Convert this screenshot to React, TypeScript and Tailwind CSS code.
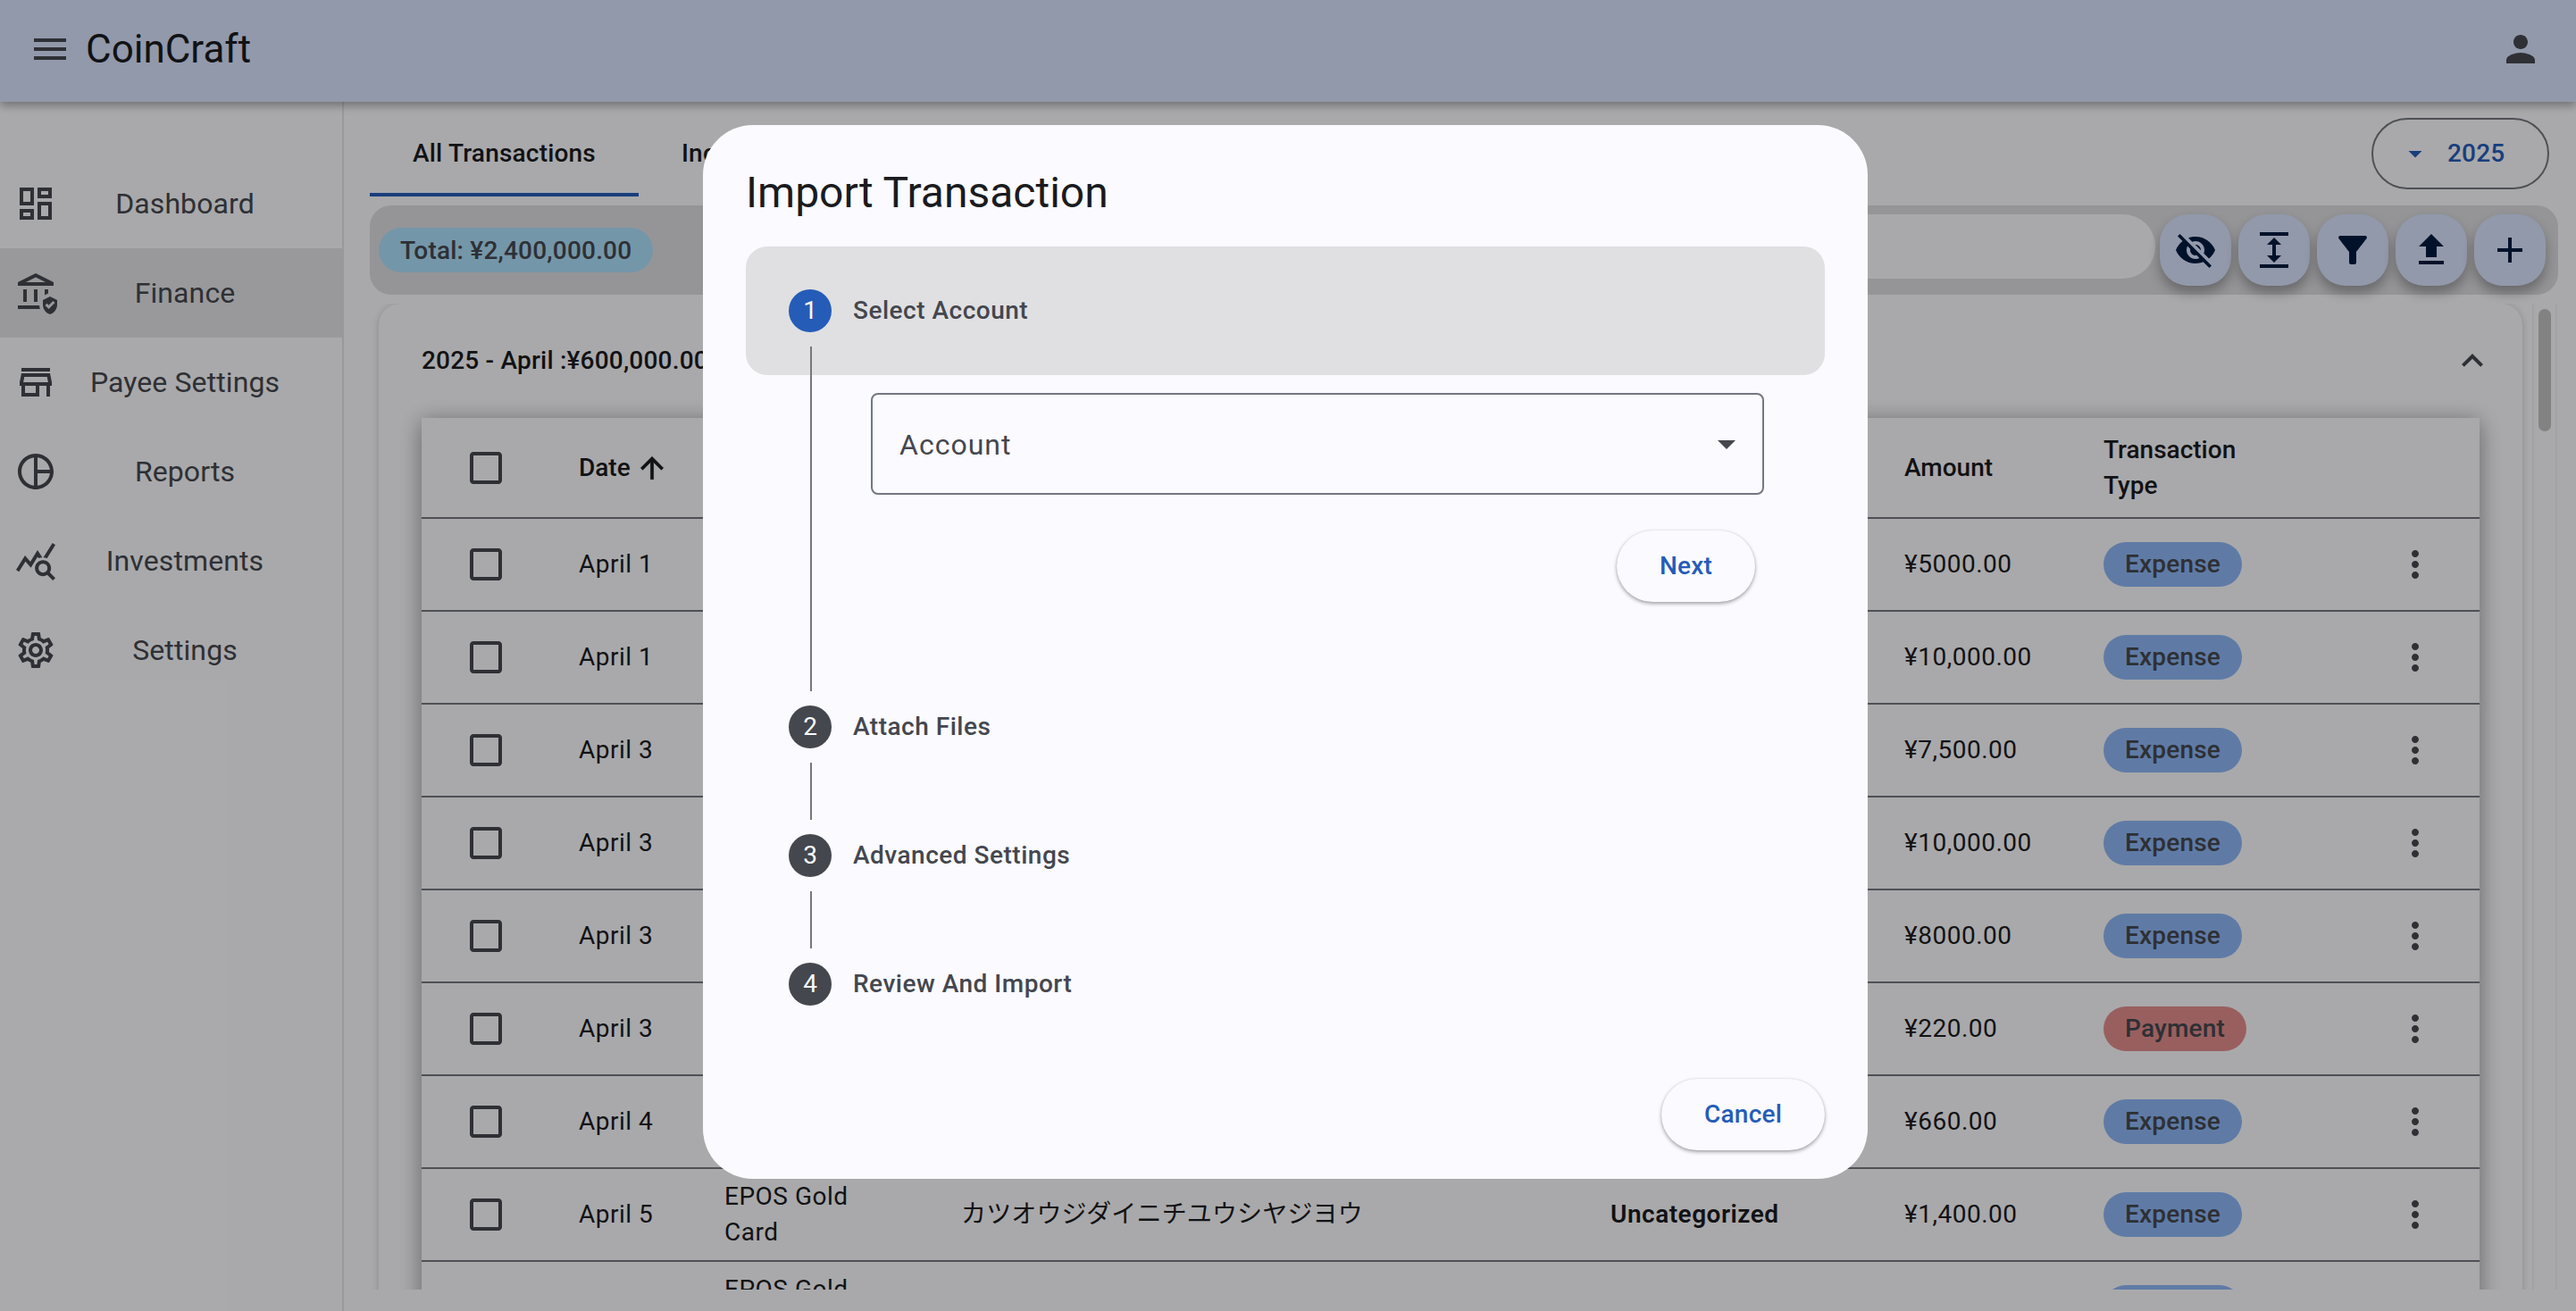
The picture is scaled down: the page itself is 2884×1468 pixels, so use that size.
import {
  MdAdd,
  MdArrowDropDown,
  MdCheckBoxOutlineBlank,
  MdExpand,
  MdExpandLess,
  MdFileUpload,
  MdFilterAlt,
  MdMenu,
  MdMoreVert,
  MdOutlineAssuredWorkload,
  MdOutlineDashboard,
  MdOutlinePieChart,
  MdOutlineSettings,
  MdOutlineStore,
  MdPerson,
  MdQueryStats,
  MdVisibilityOff,
} from "react-icons/md";

const rowGrid = "grid grid-cols-[176px_164px_265px_726px_329px_223px_325px_96px] items-center border-b-2 border-[#74777f]";

const navItems = [
  { label: "Dashboard", icon: MdOutlineDashboard },
  { label: "Finance", icon: MdOutlineAssuredWorkload, active: true },
  { label: "Payee Settings", icon: MdOutlineStore },
  { label: "Reports", icon: MdOutlinePieChart },
  { label: "Investments", icon: MdQueryStats },
  { label: "Settings", icon: MdOutlineSettings },
];

const rows = [
  { date: "April 1", amount: "¥5000.00", type: "Expense" },
  { date: "April 1", amount: "¥10,000.00", type: "Expense" },
  { date: "April 3", amount: "¥7,500.00", type: "Expense" },
  { date: "April 3", amount: "¥10,000.00", type: "Expense" },
  { date: "April 3", amount: "¥8000.00", type: "Expense" },
  { date: "April 3", amount: "¥220.00", type: "Payment" },
  { date: "April 4", amount: "¥660.00", type: "Expense" },
  {
    date: "April 5",
    account: "EPOS Gold Card",
    description: "カツオウジダイニチユウシヤジヨウ",
    category: "Uncategorized",
    amount: "¥1,400.00",
    type: "Expense",
  },
];

const actions = [MdVisibilityOff, MdExpand, MdFilterAlt, MdFileUpload, MdAdd];

function TypeChip({ type }: { type: string }) {
  const color = type === "Payment" ? "bg-[#e28d8d]" : "bg-[#8db5f3]";
  return (
    <span className={`inline-flex h-[50px] items-center rounded-full px-6 text-[28px] font-medium tracking-[0.2px] text-[#44474e] ${color}`}>
      {type}
    </span>
  );
}

function Checkbox() {
  return <MdCheckBoxOutlineBlank className="ml-12 text-[48px] text-[#44474e]" />;
}

function Sidebar() {
  return (
    <aside className="w-[385px] shrink-0 border-r-2 border-[#e2e2e5] pt-16">
      {navItems.map((item) => {
        const Icon = item.icon;
        return (
          <div key={item.label} className={`flex h-[100px] items-center pl-4 pr-[33px] ${item.active ? "bg-[#e2e2e5]" : ""}`}>
            <Icon className="shrink-0 text-[48px] text-[#44474e]" />
            <span className="flex-1 text-center text-[32px] tracking-[0.1px] text-[#44474e]">{item.label}</span>
          </div>
        );
      })}
    </aside>
  );
}

function Toolbar() {
  return (
    <div className="flex h-[100px] items-start rounded-[24px] bg-[#dcdce0] pl-[10px] pr-[14px] pt-[10px]">
      <span className="mt-[15px] inline-flex h-[50px] items-center rounded-full bg-[#acddf9] px-6 pt-[1px] text-[28px] font-medium tracking-[0.2px] text-[#44474e]">
        Total: ¥2,400,000.00
      </span>
      <div className="ml-[60px] mr-[5px] h-[72px] flex-1 rounded-full bg-[#faf9fd]" />
      <div className="flex gap-2">
        {actions.map((Icon, i) => (
          <button
            key={i}
            className="flex h-20 w-20 items-center justify-center rounded-[32px] bg-[#d8e2fc] shadow-[0_8px_14px_rgba(0,0,0,0.3)]"
          >
            <Icon className="text-[48px] text-[#001b3f]" />
          </button>
        ))}
      </div>
    </div>
  );
}

function TransactionTable() {
  return (
    <div className="ml-12 w-[2304px] bg-[#faf9fd] text-[28px] leading-[40px] text-[#1a1b20] shadow-[0_4px_24px_rgba(0,0,0,0.4)]">
      <div className={`${rowGrid} h-[113px] font-medium`}>
        <Checkbox />
        <div className="flex items-center gap-[5px]">
          Date
          {/* sort arrow, slightly heavier than the stock glyph */}
          <svg viewBox="0 0 24 24" className="h-[38px] w-[38px] fill-current stroke-current stroke-[0.4px]">
            <path d="M4 12l1.41 1.41L11 7.83V20h2V7.83l5.58 5.59L20 12l-8-8-8 8z" />
          </svg>
        </div>
        <div />
        <div />
        <div />
        <div>Amount</div>
        <div className="w-[120px]">Transaction Type</div>
        <div />
      </div>
      {rows.map((row, i) => (
        <div key={i} className={`${rowGrid} h-[104px] tracking-[0.5px]`}>
          <Checkbox />
          <div>{row.date}</div>
          <div className="-ml-[1px] w-[160px]">{row.account}</div>
          <div className="-ml-[1px] tracking-[0.15px]">{row.description}</div>
          <div className="font-semibold">{row.category}</div>
          <div>{row.amount}</div>
          <div>
            <TypeChip type={row.type} />
          </div>
          <MdMoreVert className="text-[48px] text-[#44474e]" />
        </div>
      ))}
      <div className={`${rowGrid} h-[104px] tracking-[0.5px]`}>
        <div />
        <div />
        <div className="-ml-[1px] w-[160px]">EPOS Gold Card</div>
        <div />
        <div />
        <div />
        <div>
          <TypeChip type="Expense" />
        </div>
        <div />
      </div>
    </div>
  );
}

function Step({ n, label }: { n: number; label: string }) {
  return (
    <div className="flex h-12 items-center pl-12">
      <span className="flex h-12 w-12 items-center justify-center rounded-full bg-[#44474e] text-[28px] text-[#fafaff]">{n}</span>
      <span className="ml-6 text-[28px] font-medium tracking-[0.5px] text-[#44474e]">{label}</span>
    </div>
  );
}

function ElevatedButton({ label }: { label: string }) {
  return (
    <button className="flex h-20 items-center rounded-full bg-[#fafaff] px-12 text-[28px] font-medium tracking-[0.2px] text-[#255cb8] shadow-[0_2px_4px_rgba(0,0,0,0.35),0_0_2px_rgba(0,0,0,0.1)]">
      {label}
    </button>
  );
}

function ImportDialog() {
  return (
    <div className="absolute left-[787px] top-[140px] z-30 flex h-[1180px] w-[1304px] flex-col rounded-[56px] bg-[#fafaff] px-12 pb-8 pt-[44px]">
      <h2 className="mb-[28px] text-[48px] leading-[64px] text-[#1a1b20]">Import Transaction</h2>

      {/* Active step */}
      <div className="flex h-36 items-center rounded-[24px] bg-[#e0e0e2] pl-12">
        <span className="flex h-12 w-12 items-center justify-center rounded-full bg-[#255cb8] text-[28px] text-[#fafaff]">1</span>
        <span className="ml-6 text-[28px] font-medium tracking-[0.5px] text-[#44474e]">Select Account</span>
      </div>
      <div className="-mt-8 mb-4 flex h-[386px]">
        <div className="ml-[72px] w-[2px] bg-[#74777f]" />
        <div className="ml-[66px] w-[1000px] pt-[52px]">
          <div className="flex h-[114px] items-center justify-between rounded-[8px] border-2 border-[#74777f] pl-[30px] pr-4">
            <span className="pt-[2px] text-[32px] tracking-[1px] text-[#44474e]">Account</span>
            <MdArrowDropDown className="text-[48px] text-[#44474e]" />
          </div>
          <div className="mr-[10px] mt-10 flex justify-end">
            <ElevatedButton label="Next" />
          </div>
        </div>
      </div>

      <Step n={2} label="Attach Files" />
      <div className="my-4 ml-[72px] h-16 w-[2px] bg-[#74777f]" />
      <Step n={3} label="Advanced Settings" />
      <div className="my-4 ml-[72px] h-16 w-[2px] bg-[#74777f]" />
      <Step n={4} label="Review And Import" />

      <div className="mt-auto flex justify-end">
        <ElevatedButton label="Cancel" />
      </div>
    </div>
  );
}

export default function App() {
  return (
    <div className="relative flex h-[1468px] w-[2884px] flex-col overflow-hidden bg-[#faf9fd] font-['Roboto','Noto_Sans_CJK_JP',sans-serif]">
      <header className="z-10 flex h-[114px] shrink-0 items-center justify-between bg-[#d8e2fc] pb-[5px] pl-8 pr-[38px] shadow-[0_4px_10px_rgba(0,0,0,0.35)]">
        <div className="flex items-center">
          <MdMenu className="text-[48px] text-[#44474e]" />
          <span className="ml-4 text-[44px] text-[#1a1b20]">CoinCraft</span>
        </div>
        <MdPerson className="text-[48px] text-[#44474e]" />
      </header>

      <div className="flex min-h-0 flex-1">
        <Sidebar />
        <main className="min-w-0 flex-1 pl-[29px] pr-5">
          <div className="flex h-[116px] items-start justify-between">
            <div className="mt-[10px] flex">
              <div className="flex h-24 items-center border-b-4 border-[#255cb8] px-12 pt-1 text-[28px] font-medium tracking-[0.2px] text-[#1a1b20]">
                All Transactions
              </div>
              <div className="flex h-24 items-center px-12 text-[28px] font-medium tracking-[0.2px] text-[#1a1b20]">Income</div>
            </div>
            <div className="mr-[10px] mt-[18px] flex h-20 w-[199px] items-center rounded-full border-2 border-[#74777f] pl-[29px]">
              <MdArrowDropDown className="text-[36px] text-[#255cb8]" />
              <span className="ml-[18px] text-[28px] font-medium tracking-[0.2px] text-[#255cb8]">2025</span>
            </div>
          </div>

          <Toolbar />

          <div className="mt-[10px] flex h-[1104px] overflow-hidden pl-[10px]">
            <div className="h-[1400px] w-[2400px] shrink-0 rounded-t-[24px] bg-[#faf9fd] shadow-[0_1px_8px_rgba(0,0,0,0.2)]">
              <div className="flex h-[128px] items-center justify-between pl-12 pr-8">
                <span className="text-[28px] font-medium tracking-[0.2px] text-[#1a1b20]">2025 - April :¥600,000.00</span>
                <MdExpandLess className="text-[48px] text-[#44474e]" />
              </div>
              <TransactionTable />
            </div>
            <div className="ml-[11px] w-[28px] shrink-0 border-x-2 border-[#efeff2] px-[5px] pt-[6px]">
              <div className="h-[137px] rounded-full bg-[#c0c0c0]" />
            </div>
          </div>
        </main>
      </div>

      <div className="absolute inset-0 z-20 bg-black/[0.32]" />
      <ImportDialog />
    </div>
  );
}
